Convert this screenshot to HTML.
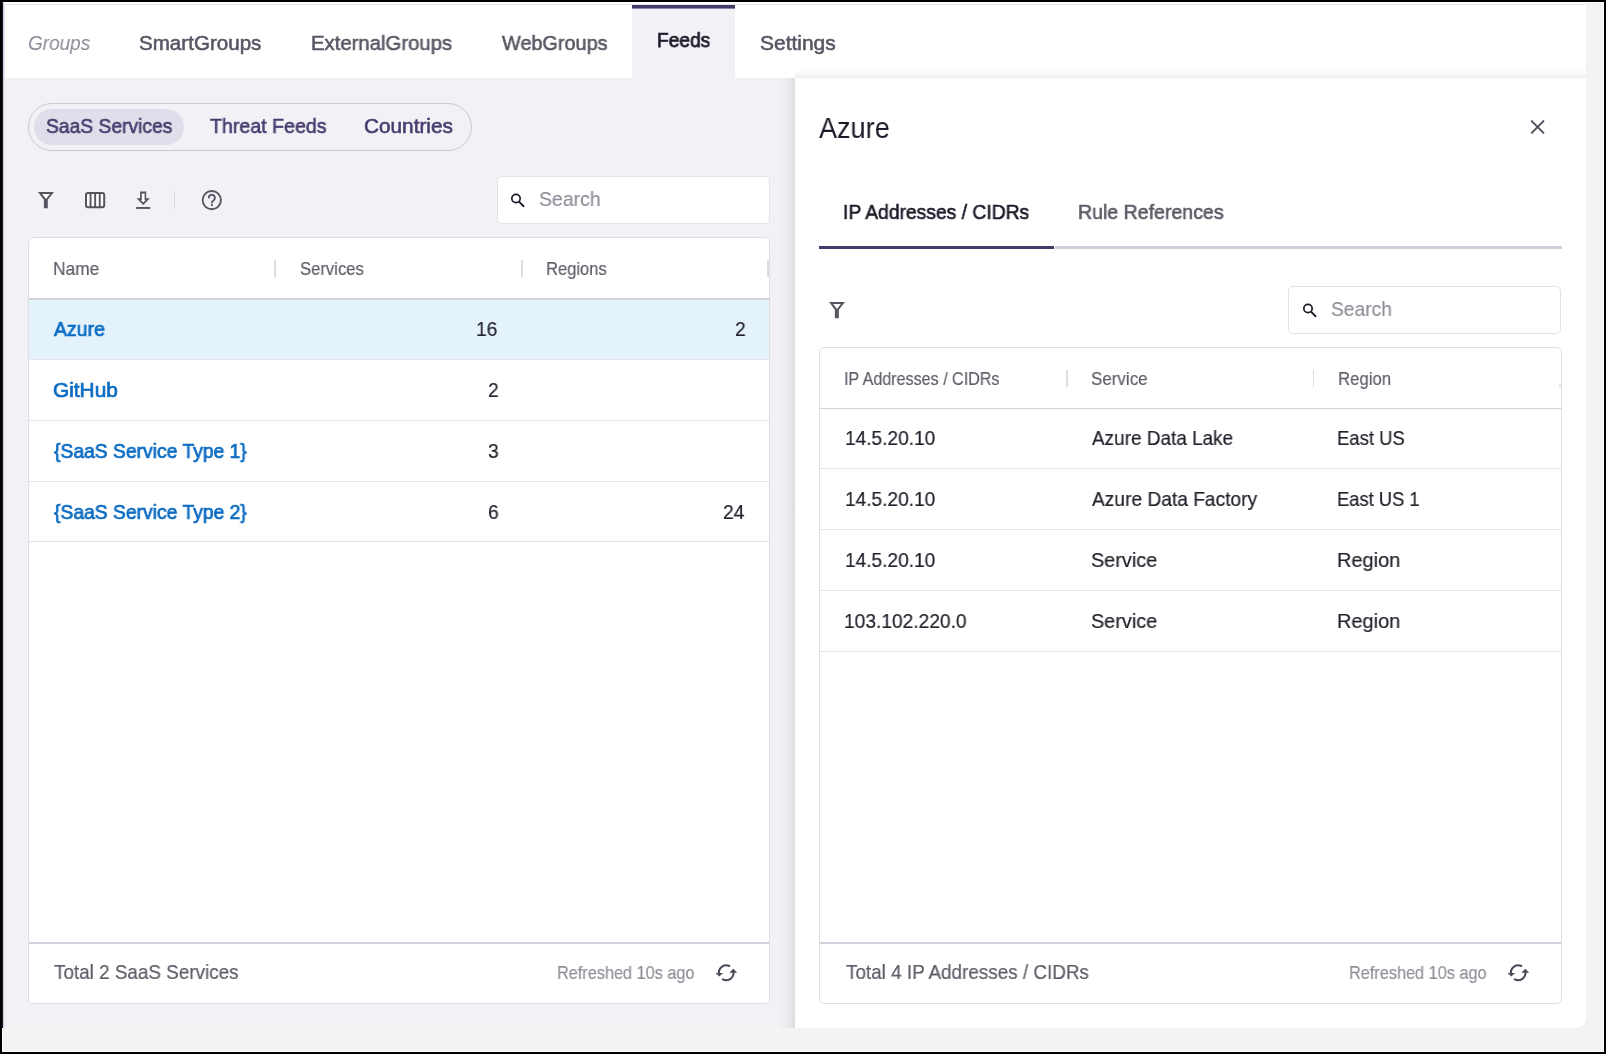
<!DOCTYPE html>
<html><head><meta charset="utf-8">
<style>
html,body{margin:0;padding:0;}
body{width:1606px;height:1054px;background:#000;position:relative;overflow:hidden;font-family:"Liberation Sans",sans-serif;}
.a{position:absolute;box-sizing:border-box;}
.t{position:absolute;transform-origin:0 0;will-change:transform;}
svg{position:absolute;overflow:visible;}
</style></head><body>
<!-- window frame -->
<div class="a" style="left:2px;top:2px;width:1602px;height:1050px;background:#fff"></div>
<div class="a" style="left:3px;top:3px;width:1600px;height:1048px;background:#f3f3f3"></div>
<!-- app -->
<div class="a" style="left:2px;top:2px;width:1584px;height:1026px;background:#f2f1f6;border-bottom-right-radius:10px;overflow:hidden">
</div>
<div class="a" style="left:2px;top:2px;width:1px;height:1026px;background:#1b1730"></div>
<!-- top bar -->
<div class="a" style="left:3px;top:2px;width:1583px;height:76px;background:#fff"></div>
<div class="a" style="left:3px;top:4px;width:1583px;height:1px;background:#e8e7ec"></div>
<div class="a" style="left:3px;top:3px;width:1px;height:1025px;background:#d2d1d9"></div>
<div class="a" style="left:4px;top:3px;width:1px;height:1025px;background:#eae9ee"></div>
<!-- Feeds tab -->
<div class="a" style="left:632px;top:5px;width:103px;height:73px;background:#f2f1f6"></div>
<div class="a" style="left:632px;top:5px;width:103px;height:3px;background:#463a6b"></div>
<div class="a" style="left:632px;top:8px;width:103px;height:1px;background:#8d86a6"></div>

<!-- segmented control -->
<div class="a" style="left:28px;top:103px;width:444px;height:48px;border:1.3px solid #cbc9d3;border-radius:24px"></div>
<div class="a" style="left:34px;top:109px;width:150px;height:36px;background:#e0deea;border-radius:18px"></div>

<!-- toolbar icons -->
<svg style="left:38px;top:192px" width="16" height="17" viewBox="0 0 16 17">
 <path d="M0 0H16L9.8 7.8V16.3H5.9V7.8Z" fill="#55545f"/>
 <path d="M4.1 2H11.9L8 7.1Z" fill="#fff"/>
</svg>
<svg style="left:84.6px;top:192px" width="21" height="17" viewBox="0 0 21 17">
 <rect x="1" y="1" width="18.2" height="14.3" rx="2" ry="2" fill="#fff" stroke="#55545f" stroke-width="2"/>
 <rect x="4.6" y="1" width="1.9" height="14.3" fill="#55545f"/>
 <rect x="9.2" y="1" width="1.9" height="14.3" fill="#55545f"/>
 <rect x="13.8" y="1" width="1.9" height="14.3" fill="#55545f"/>
</svg>
<svg style="left:136px;top:191px" width="15" height="19" viewBox="0 0 15 19">
 <path d="M4.1 0.6H10.2V7.3H13.9L7.2 13.9L0.5 7.3H4.1Z" fill="#55545f"/>
 <path d="M5.8 2.4H8.6V9H9.6L7.2 11.4L4.8 9H5.8Z" fill="#fff"/>
 <rect x="0.1" y="16" width="14.1" height="1.9" fill="#55545f"/>
</svg>
<div class="a" style="left:174px;top:191px;width:1px;height:18px;background:#dcdbe1"></div>
<svg style="left:200px;top:188px" width="24" height="24" viewBox="0 0 24 24">
 <circle cx="11.8" cy="12.1" r="9.15" fill="none" stroke="#55545f" stroke-width="1.85"/>
 <path d="M8.8 9.6A3.05 3.05 0 1 1 13.7 12.2C12.6 12.9 11.9 13.5 11.9 14.6" fill="none" stroke="#55545f" stroke-width="1.9" stroke-linecap="round"/>
 <circle cx="11.9" cy="17.1" r="1.15" fill="#55545f"/>
</svg>

<!-- left search -->
<div class="a" style="left:497px;top:176px;width:273px;height:48px;background:#fff;border:1px solid #e3e2e8;border-radius:5px"></div>
<svg style="left:506px;top:188px" width="24" height="24" viewBox="0 0 24 24">
 <circle cx="10" cy="10.5" r="4.15" fill="none" stroke="#1d1b29" stroke-width="1.7"/>
 <path d="M13.2 13.9L17.6 18.2" stroke="#1d1b29" stroke-width="1.9" stroke-linecap="round"/>
</svg>

<!-- left table card -->
<div class="a" style="left:28px;top:237px;width:742px;height:767px;background:#fff;border:1px solid #dfdee5;border-radius:5px"></div>
<div class="a" style="left:29px;top:298px;width:740px;height:1.5px;background:#d3d1db"></div>
<div class="a" style="left:29px;top:299.5px;width:740px;height:59.5px;background:#e4f2fc"></div>
<div class="a" style="left:29px;top:359px;width:740px;height:1px;background:#e4e3e9"></div>
<div class="a" style="left:29px;top:420px;width:740px;height:1px;background:#e4e3e9"></div>
<div class="a" style="left:29px;top:481px;width:740px;height:1px;background:#e4e3e9"></div>
<div class="a" style="left:29px;top:541px;width:740px;height:1px;background:#e4e3e9"></div>
<div class="a" style="left:29px;top:942px;width:740px;height:1.5px;background:#d3d1db"></div>
<div class="a" style="left:274px;top:260px;width:1.5px;height:17px;background:#dddce2"></div>
<div class="a" style="left:521px;top:260px;width:1.5px;height:17px;background:#dddce2"></div>
<div class="a" style="left:767px;top:260px;width:1.5px;height:17px;background:#dddce2"></div>
<svg style="left:710px;top:958px" width="32" height="28" viewBox="0 0 32 28">
 <path d="M19.3 8A7.3 7.3 0 0 0 8.9 15" fill="none" stroke="#4a4955" stroke-width="2" stroke-linecap="round"/>
 <path d="M5.6 14.9H13L9.3 18.6Z" fill="#4a4955"/>
 <path d="M12.8 21.3A7.3 7.3 0 0 0 23.5 14.6" fill="none" stroke="#4a4955" stroke-width="2" stroke-linecap="round"/>
 <path d="M19.4 14.7H27.2L23.3 10.8Z" fill="#4a4955"/>
</svg>

<!-- right panel -->
<div class="a" style="left:778px;top:78px;width:17px;height:950px;background:linear-gradient(to right, rgba(40,40,50,0) 0%, rgba(40,40,50,0.035) 55%, rgba(40,40,50,0.075) 85%, rgba(40,40,50,0.11) 100%)"></div>
<div class="a" style="left:795px;top:68px;width:791px;height:10px;background:linear-gradient(to bottom, rgba(40,40,50,0) 0%, rgba(40,40,50,0.015) 40%, rgba(40,40,50,0.045) 75%, rgba(40,40,50,0.085) 100%)"></div>
<div class="a" style="left:795px;top:78px;width:791px;height:950px;background:#fff;border-bottom-right-radius:10px;"></div>
<svg style="left:1528px;top:118px" width="19" height="19" viewBox="0 0 19 19">
 <path d="M3.8 3.1L15.4 14.9M15.4 3.1L3.8 14.9" stroke="#52515d" stroke-width="2" stroke-linecap="round"/>
</svg>
<div class="a" style="left:819px;top:246px;width:235px;height:3px;background:#45396a"></div>
<div class="a" style="left:1055px;top:246px;width:507px;height:3px;background:#d1cfda"></div>
<svg style="left:829px;top:302px" width="16" height="17" viewBox="0 0 16 17">
 <path d="M0 0H16L9.8 7.8V16.3H5.9V7.8Z" fill="#55545f"/>
 <path d="M4.1 2H11.9L8 7.1Z" fill="#fff"/>
</svg>
<div class="a" style="left:1288px;top:286px;width:273px;height:48px;background:#fff;border:1px solid #e3e2e8;border-radius:5px"></div>
<svg style="left:1297.8px;top:298px" width="24" height="24" viewBox="0 0 24 24">
 <circle cx="10" cy="10.5" r="4.15" fill="none" stroke="#1d1b29" stroke-width="1.7"/>
 <path d="M13.2 13.9L17.6 18.2" stroke="#1d1b29" stroke-width="1.9" stroke-linecap="round"/>
</svg>

<!-- right table card -->
<div class="a" style="left:819px;top:347px;width:743px;height:657px;background:#fff;border:1px solid #dfdee5;border-radius:5px"></div>
<div class="a" style="left:820px;top:407.5px;width:741px;height:1.5px;background:#d3d1db"></div>
<div class="a" style="left:820px;top:468px;width:741px;height:1px;background:#e4e3e9"></div>
<div class="a" style="left:820px;top:529px;width:741px;height:1px;background:#e4e3e9"></div>
<div class="a" style="left:820px;top:590px;width:741px;height:1px;background:#e4e3e9"></div>
<div class="a" style="left:820px;top:651px;width:741px;height:1px;background:#e4e3e9"></div>
<div class="a" style="left:820px;top:942px;width:741px;height:1.5px;background:#d3d1db"></div>
<div class="a" style="left:1066px;top:370px;width:1.5px;height:17px;background:#dddce2"></div>
<div class="a" style="left:1312.5px;top:370px;width:1.5px;height:17px;background:#dddce2"></div>
<div class="a" style="left:1559px;top:384px;width:2px;height:3px;background:#e3e2e8"></div>
<svg style="left:1501.8px;top:958px" width="32" height="28" viewBox="0 0 32 28">
 <path d="M19.3 8A7.3 7.3 0 0 0 8.9 15" fill="none" stroke="#4a4955" stroke-width="2" stroke-linecap="round"/>
 <path d="M5.6 14.9H13L9.3 18.6Z" fill="#4a4955"/>
 <path d="M12.8 21.3A7.3 7.3 0 0 0 23.5 14.6" fill="none" stroke="#4a4955" stroke-width="2" stroke-linecap="round"/>
 <path d="M19.4 14.7H27.2L23.3 10.8Z" fill="#4a4955"/>
</svg>

<div class="t" style="left:27.97px;top:29.60px;font-family:'Liberation Sans', sans-serif;font-size:20.4px;font-weight:400;font-style:italic;line-height:26px;white-space:nowrap;color:#8a8994;transform:scaleX(0.9292)">Groups</div>
<div class="t" style="left:139.09px;top:29.60px;font-family:'Liberation Sans', sans-serif;font-size:20.4px;font-weight:400;font-style:normal;line-height:26px;white-space:nowrap;-webkit-text-stroke:0.55px #575663;color:#575663;transform:scaleX(1.0092)">SmartGroups</div>
<div class="t" style="left:311.30px;top:29.60px;font-family:'Liberation Sans', sans-serif;font-size:20.4px;font-weight:400;font-style:normal;line-height:26px;white-space:nowrap;-webkit-text-stroke:0.55px #575663;color:#575663;transform:scaleX(0.9957)">ExternalGroups</div>
<div class="t" style="left:501.90px;top:29.60px;font-family:'Liberation Sans', sans-serif;font-size:20.4px;font-weight:400;font-style:normal;line-height:26px;white-space:nowrap;-webkit-text-stroke:0.55px #575663;color:#575663;transform:scaleX(0.9731)">WebGroups</div>
<div class="t" style="left:657.06px;top:26.90px;font-family:'Liberation Sans', sans-serif;font-size:20.4px;font-weight:400;font-style:normal;line-height:26px;white-space:nowrap;-webkit-text-stroke:0.75px #1d1b29;color:#1d1b29;transform:scaleX(0.9382)">Feeds</div>
<div class="t" style="left:759.97px;top:29.60px;font-family:'Liberation Sans', sans-serif;font-size:20.4px;font-weight:400;font-style:normal;line-height:26px;white-space:nowrap;-webkit-text-stroke:0.55px #575663;color:#575663;transform:scaleX(1.0278)">Settings</div>
<div class="t" style="left:45.76px;top:113.00px;font-family:'Liberation Sans', sans-serif;font-size:20.4px;font-weight:400;font-style:normal;line-height:26px;white-space:nowrap;-webkit-text-stroke:0.6px #483c6e;color:#483c6e;transform:scaleX(0.9447)">SaaS Services</div>
<div class="t" style="left:209.50px;top:113.00px;font-family:'Liberation Sans', sans-serif;font-size:20.4px;font-weight:400;font-style:normal;line-height:26px;white-space:nowrap;-webkit-text-stroke:0.6px #483c6e;color:#483c6e;transform:scaleX(0.9612)">Threat Feeds</div>
<div class="t" style="left:363.78px;top:113.00px;font-family:'Liberation Sans', sans-serif;font-size:20.4px;font-weight:400;font-style:normal;line-height:26px;white-space:nowrap;-webkit-text-stroke:0.6px #483c6e;color:#483c6e;transform:scaleX(1.0186)">Countries</div>
<div class="t" style="left:538.75px;top:186.10px;font-family:'Liberation Sans', sans-serif;font-size:20.4px;font-weight:400;font-style:normal;line-height:26px;white-space:nowrap;-webkit-text-stroke:0.15px #8e8d97;color:#8e8d97;transform:scaleX(0.9548)">Search</div>
<div class="t" style="left:53.16px;top:257.30px;font-family:'Liberation Sans', sans-serif;font-size:18.4px;font-weight:400;font-style:normal;line-height:23px;white-space:nowrap;-webkit-text-stroke:0.15px #5c5b66;color:#5c5b66;transform:scaleX(0.9447)">Name</div>
<div class="t" style="left:299.79px;top:257.30px;font-family:'Liberation Sans', sans-serif;font-size:18.4px;font-weight:400;font-style:normal;line-height:23px;white-space:nowrap;-webkit-text-stroke:0.15px #5c5b66;color:#5c5b66;transform:scaleX(0.9058)">Services</div>
<div class="t" style="left:546.30px;top:257.30px;font-family:'Liberation Sans', sans-serif;font-size:18.4px;font-weight:400;font-style:normal;line-height:23px;white-space:nowrap;-webkit-text-stroke:0.15px #5c5b66;color:#5c5b66;transform:scaleX(0.9000)">Regions</div>
<div class="t" style="left:54.10px;top:315.90px;font-family:'Liberation Sans', sans-serif;font-size:20.4px;font-weight:400;font-style:normal;line-height:26px;white-space:nowrap;-webkit-text-stroke:0.7px #0b6cc2;color:#0b6cc2;transform:scaleX(0.9547)">Azure</div>
<div class="t" style="left:53.28px;top:376.80px;font-family:'Liberation Sans', sans-serif;font-size:20.4px;font-weight:400;font-style:normal;line-height:26px;white-space:nowrap;-webkit-text-stroke:0.7px #0b6cc2;color:#0b6cc2;transform:scaleX(1.0210)">GitHub</div>
<div class="t" style="left:54.00px;top:437.80px;font-family:'Liberation Sans', sans-serif;font-size:20.4px;font-weight:400;font-style:normal;line-height:26px;white-space:nowrap;-webkit-text-stroke:0.7px #0b6cc2;color:#0b6cc2;transform:scaleX(0.9466)">{SaaS Service Type 1}</div>
<div class="t" style="left:54.00px;top:498.80px;font-family:'Liberation Sans', sans-serif;font-size:20.4px;font-weight:400;font-style:normal;line-height:26px;white-space:nowrap;-webkit-text-stroke:0.7px #0b6cc2;color:#0b6cc2;transform:scaleX(0.9466)">{SaaS Service Type 2}</div>
<div class="t" style="left:476.23px;top:315.90px;font-family:'Liberation Sans', sans-serif;font-size:20.4px;font-weight:400;font-style:normal;line-height:26px;white-space:nowrap;-webkit-text-stroke:0.2px #23222c;color:#23222c;transform:scaleX(0.9439)">16</div>
<div class="t" style="left:734.86px;top:315.90px;font-family:'Liberation Sans', sans-serif;font-size:20.4px;font-weight:400;font-style:normal;line-height:26px;white-space:nowrap;-webkit-text-stroke:0.2px #23222c;color:#23222c;transform:scaleX(0.9439)">2</div>
<div class="t" style="left:487.86px;top:376.80px;font-family:'Liberation Sans', sans-serif;font-size:20.4px;font-weight:400;font-style:normal;line-height:26px;white-space:nowrap;-webkit-text-stroke:0.2px #23222c;color:#23222c;transform:scaleX(0.9439)">2</div>
<div class="t" style="left:487.86px;top:437.80px;font-family:'Liberation Sans', sans-serif;font-size:20.4px;font-weight:400;font-style:normal;line-height:26px;white-space:nowrap;-webkit-text-stroke:0.2px #23222c;color:#23222c;transform:scaleX(0.9439)">3</div>
<div class="t" style="left:487.86px;top:498.80px;font-family:'Liberation Sans', sans-serif;font-size:20.4px;font-weight:400;font-style:normal;line-height:26px;white-space:nowrap;-webkit-text-stroke:0.2px #23222c;color:#23222c;transform:scaleX(0.9439)">6</div>
<div class="t" style="left:723.13px;top:498.80px;font-family:'Liberation Sans', sans-serif;font-size:20.4px;font-weight:400;font-style:normal;line-height:26px;white-space:nowrap;-webkit-text-stroke:0.2px #23222c;color:#23222c;transform:scaleX(0.9439)">24</div>
<div class="t" style="left:54.30px;top:958.90px;font-family:'Liberation Sans', sans-serif;font-size:20.4px;font-weight:400;font-style:normal;line-height:26px;white-space:nowrap;-webkit-text-stroke:0.2px #5c5b66;color:#5c5b66;transform:scaleX(0.9251)">Total 2 SaaS Services</div>
<div class="t" style="left:557.32px;top:960.90px;font-family:'Liberation Sans', sans-serif;font-size:18.4px;font-weight:400;font-style:normal;line-height:23px;white-space:nowrap;-webkit-text-stroke:0.15px #8e8d97;color:#8e8d97;transform:scaleX(0.8844)">Refreshed 10s ago</div>
<div class="t" style="left:819.20px;top:109.90px;font-family:'Liberation Sans', sans-serif;font-size:29.0px;font-weight:400;font-style:normal;line-height:36px;white-space:nowrap;color:#1d1b29;transform:scaleX(0.9333)">Azure</div>
<div class="t" style="left:842.91px;top:198.50px;font-family:'Liberation Sans', sans-serif;font-size:20.4px;font-weight:400;font-style:normal;line-height:26px;white-space:nowrap;-webkit-text-stroke:0.6px #1d1b29;color:#1d1b29;transform:scaleX(0.9459)">IP Addresses / CIDRs</div>
<div class="t" style="left:1077.84px;top:198.50px;font-family:'Liberation Sans', sans-serif;font-size:20.4px;font-weight:400;font-style:normal;line-height:26px;white-space:nowrap;-webkit-text-stroke:0.6px #5c5b66;color:#5c5b66;transform:scaleX(0.9583)">Rule References</div>
<div class="t" style="left:1330.56px;top:296.20px;font-family:'Liberation Sans', sans-serif;font-size:20.4px;font-weight:400;font-style:normal;line-height:26px;white-space:nowrap;-webkit-text-stroke:0.15px #8e8d97;color:#8e8d97;transform:scaleX(0.9435)">Search</div>
<div class="t" style="left:843.75px;top:366.50px;font-family:'Liberation Sans', sans-serif;font-size:18.4px;font-weight:400;font-style:normal;line-height:23px;white-space:nowrap;-webkit-text-stroke:0.15px #5c5b66;color:#5c5b66;transform:scaleX(0.8760)">IP Addresses / CIDRs</div>
<div class="t" style="left:1091.08px;top:366.50px;font-family:'Liberation Sans', sans-serif;font-size:18.4px;font-weight:400;font-style:normal;line-height:23px;white-space:nowrap;-webkit-text-stroke:0.15px #5c5b66;color:#5c5b66;transform:scaleX(0.9237)">Service</div>
<div class="t" style="left:1337.99px;top:366.50px;font-family:'Liberation Sans', sans-serif;font-size:18.4px;font-weight:400;font-style:normal;line-height:23px;white-space:nowrap;-webkit-text-stroke:0.15px #5c5b66;color:#5c5b66;transform:scaleX(0.9125)">Region</div>
<div class="t" style="left:844.56px;top:425.30px;font-family:'Liberation Sans', sans-serif;font-size:20.4px;font-weight:400;font-style:normal;line-height:26px;white-space:nowrap;-webkit-text-stroke:0.2px #23222c;color:#23222c;transform:scaleX(0.9368)">14.5.20.10</div>
<div class="t" style="left:1092.00px;top:425.30px;font-family:'Liberation Sans', sans-serif;font-size:20.4px;font-weight:400;font-style:normal;line-height:26px;white-space:nowrap;-webkit-text-stroke:0.2px #23222c;color:#23222c;transform:scaleX(0.9291)">Azure Data Lake</div>
<div class="t" style="left:1337.19px;top:425.30px;font-family:'Liberation Sans', sans-serif;font-size:20.4px;font-weight:400;font-style:normal;line-height:26px;white-space:nowrap;-webkit-text-stroke:0.2px #23222c;color:#23222c;transform:scaleX(0.9056)">East US</div>
<div class="t" style="left:844.56px;top:486.30px;font-family:'Liberation Sans', sans-serif;font-size:20.4px;font-weight:400;font-style:normal;line-height:26px;white-space:nowrap;-webkit-text-stroke:0.2px #23222c;color:#23222c;transform:scaleX(0.9368)">14.5.20.10</div>
<div class="t" style="left:1091.80px;top:486.30px;font-family:'Liberation Sans', sans-serif;font-size:20.4px;font-weight:400;font-style:normal;line-height:26px;white-space:nowrap;-webkit-text-stroke:0.2px #23222c;color:#23222c;transform:scaleX(0.9398)">Azure Data Factory</div>
<div class="t" style="left:1337.20px;top:486.30px;font-family:'Liberation Sans', sans-serif;font-size:20.4px;font-weight:400;font-style:normal;line-height:26px;white-space:nowrap;-webkit-text-stroke:0.2px #23222c;color:#23222c;transform:scaleX(0.8989)">East US 1</div>
<div class="t" style="left:844.56px;top:547.30px;font-family:'Liberation Sans', sans-serif;font-size:20.4px;font-weight:400;font-style:normal;line-height:26px;white-space:nowrap;-webkit-text-stroke:0.2px #23222c;color:#23222c;transform:scaleX(0.9368)">14.5.20.10</div>
<div class="t" style="left:1090.83px;top:547.30px;font-family:'Liberation Sans', sans-serif;font-size:20.4px;font-weight:400;font-style:normal;line-height:26px;white-space:nowrap;-webkit-text-stroke:0.2px #23222c;color:#23222c;transform:scaleX(0.9727)">Service</div>
<div class="t" style="left:1337.04px;top:547.30px;font-family:'Liberation Sans', sans-serif;font-size:20.4px;font-weight:400;font-style:normal;line-height:26px;white-space:nowrap;-webkit-text-stroke:0.2px #23222c;color:#23222c;transform:scaleX(0.9787)">Region</div>
<div class="t" style="left:844.06px;top:608.30px;font-family:'Liberation Sans', sans-serif;font-size:20.4px;font-weight:400;font-style:normal;line-height:26px;white-space:nowrap;-webkit-text-stroke:0.2px #23222c;color:#23222c;transform:scaleX(0.9403)">103.102.220.0</div>
<div class="t" style="left:1090.83px;top:608.30px;font-family:'Liberation Sans', sans-serif;font-size:20.4px;font-weight:400;font-style:normal;line-height:26px;white-space:nowrap;-webkit-text-stroke:0.2px #23222c;color:#23222c;transform:scaleX(0.9727)">Service</div>
<div class="t" style="left:1337.04px;top:608.30px;font-family:'Liberation Sans', sans-serif;font-size:20.4px;font-weight:400;font-style:normal;line-height:26px;white-space:nowrap;-webkit-text-stroke:0.2px #23222c;color:#23222c;transform:scaleX(0.9787)">Region</div>
<div class="t" style="left:845.90px;top:959.00px;font-family:'Liberation Sans', sans-serif;font-size:20.4px;font-weight:400;font-style:normal;line-height:26px;white-space:nowrap;-webkit-text-stroke:0.2px #5c5b66;color:#5c5b66;transform:scaleX(0.9252)">Total 4 IP Addresses / CIDRs</div>
<div class="t" style="left:1348.81px;top:961.00px;font-family:'Liberation Sans', sans-serif;font-size:18.4px;font-weight:400;font-style:normal;line-height:23px;white-space:nowrap;-webkit-text-stroke:0.15px #8e8d97;color:#8e8d97;transform:scaleX(0.8851)">Refreshed 10s ago</div>
</body></html>
